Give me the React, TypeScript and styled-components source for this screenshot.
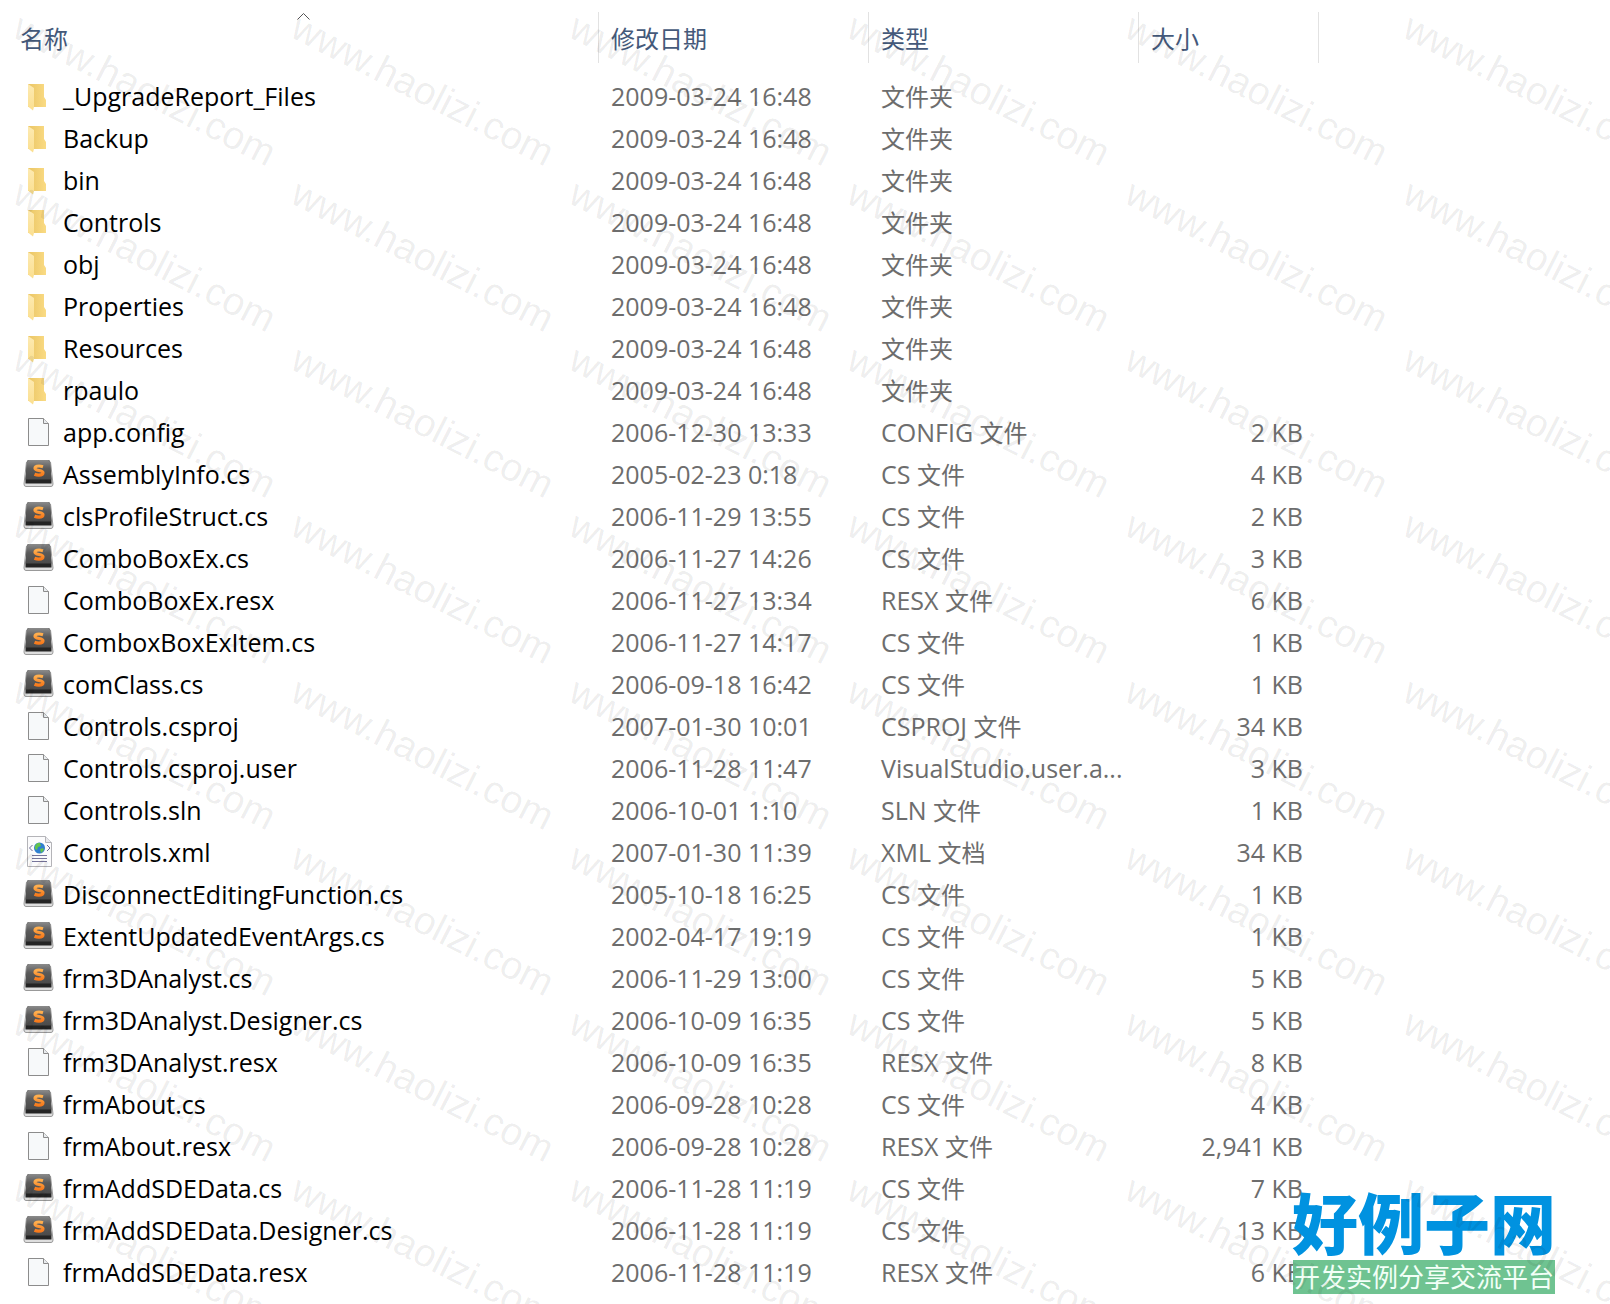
import React from "react";
import styled, { createGlobalStyle } from "styled-components";

const latin = `"Open Sans", "Noto Sans", "Noto Sans CJK SC", sans-serif`;
const cjk = `"Noto Sans CJK SC", "Noto Sans", sans-serif`;

const GlobalStyle = createGlobalStyle`
  * { box-sizing: border-box; }
  body { margin: 0; background: #fff; }
`;

const Page = styled.main`
  position: relative;
  overflow: hidden;
  padding: 12px 0 10px 8px;
  color: #6d6d6d;
  font: 25px/40px ${latin};
  font-variant-ligatures: none;
`;

const Table = styled.table`
  width: 1311px;
  table-layout: fixed;
  border-collapse: separate;
  border-spacing: 0;
`;

const Column = styled.col<{ $width: number }>`
  width: ${(p) => p.$width}px;
`;

const HeadCell = styled.th`
  height: 64px;
  padding: 0;
  vertical-align: top;
  font-weight: 400;
`;

const SortButton = styled.button`
  position: relative;
  display: block;
  width: 100%;
  height: 51px;
  padding: 0 12px;
  border: 0;
  border-right: 1px solid #e2e2e2;
  background: none;
  color: #44597a;
  font: 24px/50px ${cjk};
  text-align: left;
`;

const SortMark = styled.svg`
  position: absolute;
  top: 0;
  left: calc(50% - 7px);
  width: 15px;
  height: 9px;
`;

const Cell = styled.td<{ $end?: boolean }>`
  height: 42px;
  padding: 0 16px 2px 12px;
  overflow: hidden;
  text-align: ${(p) => (p.$end ? "right" : "left")};
  text-overflow: ellipsis;
  white-space: nowrap;
`;

const FileName = styled.div`
  display: flex;
  gap: 8px;
  align-items: flex-start;
  height: 40px;
  margin-left: 2px;
  color: #000;
`;

const Icon = styled.svg`
  flex: none;
  width: 33px;
  height: 34px;
  margin-top: 4px;
`;

const Chinese = styled.span`
  font: 24px/1 ${cjk};
`;

const Watermarks = styled.div`
  position: absolute;
  inset: 0;
  display: grid;
  grid-template-columns: repeat(6, 278px);
  grid-auto-rows: 166px;
  padding: 3px 0 0 10px;
  overflow: hidden;
  pointer-events: none;
`;

const Watermark = styled.span`
  color: rgba(0, 0, 0, 0.075);
  font: 39px/40px "Liberation Sans", Arial, sans-serif;
  transform: rotate(27deg);
  transform-origin: 0 34px;
  white-space: nowrap;
`;

const Brand = styled.div`
  position: absolute;
  right: 55px;
  bottom: 10px;
  width: 262px;
`;

const BrandName = styled.div`
  display: flex;
  justify-content: center;
  padding-bottom: 6px;
  color: #0092e0;
  font: 900 66px/68px ${cjk};
  white-space: nowrap;
`;

const Slogan = styled.div`
  display: flex;
  justify-content: center;
  padding-bottom: 2px;
  background: #6fc391;
  color: #f2fff7;
  font: 26px/32px ${cjk};
  white-space: nowrap;
`;

type Kind = "folder" | "blank" | "sublime" | "xml";

function Folder() {
  return (
    <Icon viewBox="0 0 33 34" aria-hidden="true">
      <defs>
        <linearGradient id="folderBack" x1="0" x2="1">
          <stop offset="0" stopColor="#eac564" />
          <stop offset="1" stopColor="#fadb84" />
        </linearGradient>
        <linearGradient id="folderFront" x1="0" x2="0" y1="0" y2="1">
          <stop offset="0" stopColor="#fdeab2" />
          <stop offset="1" stopColor="#fbdf8f" />
        </linearGradient>
      </defs>
      <path d="M6 4h16v13l2 3v7H6z" fill="url(#folderBack)" />
      <path d="M6 4l6 4v19l-1 3.500-5-4z" fill="url(#folderFront)" />
    </Icon>
  );
}

function Blank() {
  return (
    <Icon viewBox="0 0 33 34" aria-hidden="true">
      <path d="M6.500 2.500h15l5 5v22h-20z" fill="#f7f9fa" stroke="#8c8c8c" />
      <path d="M21.500 2.500v5h5" fill="#e9ecee" stroke="#8c8c8c" />
    </Icon>
  );
}

function Sublime() {
  return (
    <Icon viewBox="0 0 33 34" aria-hidden="true">
      <defs>
        <linearGradient id="key" x1="0" x2="0" y1="0" y2="1">
          <stop offset="0" stopColor="#8b8b8b" />
          <stop offset=".45" stopColor="#5a5a5a" />
          <stop offset="1" stopColor="#4a4a4a" />
        </linearGradient>
        <linearGradient id="letter" x1="0" x2="0" y1="0" y2="1">
          <stop offset="0" stopColor="#ffb04f" />
          <stop offset="1" stopColor="#f77a1c" />
        </linearGradient>
      </defs>
      <path d="M4.500 4h24l2.500 22q0 2.500-2 2.500H4q-2 0-2-2.500z" fill="#dedede" stroke="#999" />
      <path d="M5 4q0-2 2-2h19q2 0 2 2l1.500 18v3.500h-26V22z" fill="#242424" />
      <path d="M5 4q0-2 2-2h19q2 0 2 2l1.500 17.500h-26z" fill="url(#key)" />
      <path
        d="M21 8.700Q18.700 8 17 8c-2.500 0-4 .8-4 2.300 0 3 8 1.500 8 4.500 0 1.700-1.800 2.400-4.200 2.400q-2.300 0-4.300-.9"
        fill="none"
        stroke="url(#letter)"
        strokeWidth="3.200"
      />
    </Icon>
  );
}

function Xml() {
  return (
    <Icon viewBox="0 0 33 34" aria-hidden="true">
      <path d="M5.500.500h18l6 6v24h-24z" fill="#fbfbfc" stroke="#b4b4b8" />
      <path d="M23.500.500v6h6" fill="#e8e8ec" stroke="#b4b4b8" />
      <circle cx="17.500" cy="12" r="5.500" fill="#2f7fd0" />
      <path d="M13 10q2-4 5-3l1 3-3 1-1 3-2-1zM18 13l3-1 1 2-3 3z" fill="#63c34c" />
      <path d="M10.500 9l-3 3 3 3M25 9l3 3-3 3" fill="none" stroke="#6b6894" />
      <path d="M10 19.500h15M10 22.500h15M10 25.500h15" stroke="#77759a" />
    </Icon>
  );
}

const icons: Record<Kind, () => React.JSX.Element> = {
  folder: Folder,
  blank: Blank,
  sublime: Sublime,
  xml: Xml,
};

type Entry = [kind: Kind, name: string, date: string, type: string, size: string];

const folder = (name: string): Entry => ["folder", name, "2009-03-24 16:48", "文件夹", ""];
const cs = (name: string, date: string, size: string): Entry => ["sublime", name, date, "CS 文件", size];
const resx = (name: string, date: string, size: string): Entry => ["blank", name, date, "RESX 文件", size];

const entries: Entry[] = [
  folder("_UpgradeReport_Files"),
  folder("Backup"),
  folder("bin"),
  folder("Controls"),
  folder("obj"),
  folder("Properties"),
  folder("Resources"),
  folder("rpaulo"),
  ["blank", "app.config", "2006-12-30 13:33", "CONFIG 文件", "2 KB"],
  cs("AssemblyInfo.cs", "2005-02-23 0:18", "4 KB"),
  cs("clsProfileStruct.cs", "2006-11-29 13:55", "2 KB"),
  cs("ComboBoxEx.cs", "2006-11-27 14:26", "3 KB"),
  resx("ComboBoxEx.resx", "2006-11-27 13:34", "6 KB"),
  cs("ComboxBoxExItem.cs", "2006-11-27 14:17", "1 KB"),
  cs("comClass.cs", "2006-09-18 16:42", "1 KB"),
  ["blank", "Controls.csproj", "2007-01-30 10:01", "CSPROJ 文件", "34 KB"],
  ["blank", "Controls.csproj.user", "2006-11-28 11:47", "VisualStudio.user.a...", "3 KB"],
  ["blank", "Controls.sln", "2006-10-01 1:10", "SLN 文件", "1 KB"],
  ["xml", "Controls.xml", "2007-01-30 11:39", "XML 文档", "34 KB"],
  cs("DisconnectEditingFunction.cs", "2005-10-18 16:25", "1 KB"),
  cs("ExtentUpdatedEventArgs.cs", "2002-04-17 19:19", "1 KB"),
  cs("frm3DAnalyst.cs", "2006-11-29 13:00", "5 KB"),
  cs("frm3DAnalyst.Designer.cs", "2006-10-09 16:35", "5 KB"),
  resx("frm3DAnalyst.resx", "2006-10-09 16:35", "8 KB"),
  cs("frmAbout.cs", "2006-09-28 10:28", "4 KB"),
  resx("frmAbout.resx", "2006-09-28 10:28", "2,941 KB"),
  cs("frmAddSDEData.cs", "2006-11-28 11:19", "7 KB"),
  cs("frmAddSDEData.Designer.cs", "2006-11-28 11:19", "13 KB"),
  resx("frmAddSDEData.resx", "2006-11-28 11:19", "6 KB"),
];

const columns = [
  { label: "名称", width: 591 },
  { label: "修改日期", width: 270 },
  { label: "类型", width: 270 },
  { label: "大小", width: 180 },
];

// Chinese words are set one pixel smaller than the Latin text beside them.
function TypeLabel({ text }: { text: string }) {
  const words = text.split(/([\u4e00-\u9fff]+)/).filter(Boolean);
  return (
    <>
      {words.map((word) => (/[\u4e00-\u9fff]/.test(word) ? <Chinese key={word}>{word}</Chinese> : word))}
    </>
  );
}

function FileRow({ entry }: { entry: Entry }) {
  const [kind, name, date, type, size] = entry;
  const FileIcon = icons[kind];
  return (
    <tr>
      <Cell>
        <FileName>
          <FileIcon />
          {name}
        </FileName>
      </Cell>
      <Cell>{date}</Cell>
      <Cell>
        <TypeLabel text={type} />
      </Cell>
      <Cell $end>{size}</Cell>
    </tr>
  );
}

export default function App() {
  return (
    <Page lang="zh-CN">
      <GlobalStyle />
      <Table>
        <colgroup>
          {columns.map((c) => (
            <Column key={c.label} $width={c.width} />
          ))}
        </colgroup>
        <thead>
          <tr>
            {columns.map((c, i) => (
              <HeadCell key={c.label} scope="col" aria-sort={i === 0 ? "ascending" : undefined}>
                <SortButton type="button">
                  {c.label}
                  {i === 0 && (
                    <SortMark viewBox="0 0 15 9" aria-hidden="true">
                      <path d="M1.500 7.500l6-6 6 6" fill="none" stroke="#555" />
                    </SortMark>
                  )}
                </SortButton>
              </HeadCell>
            ))}
          </tr>
        </thead>
        <tbody>
          {entries.map((entry) => (
            <FileRow key={entry[1]} entry={entry} />
          ))}
        </tbody>
      </Table>
      <Brand>
        <BrandName>好例子网</BrandName>
        <Slogan>开发实例分享交流平台</Slogan>
      </Brand>
      <Watermarks aria-hidden="true">
        {Array.from({ length: 48 }, (_, i) => (
          <Watermark key={i}>www.haolizi.com</Watermark>
        ))}
      </Watermarks>
    </Page>
  );
}
